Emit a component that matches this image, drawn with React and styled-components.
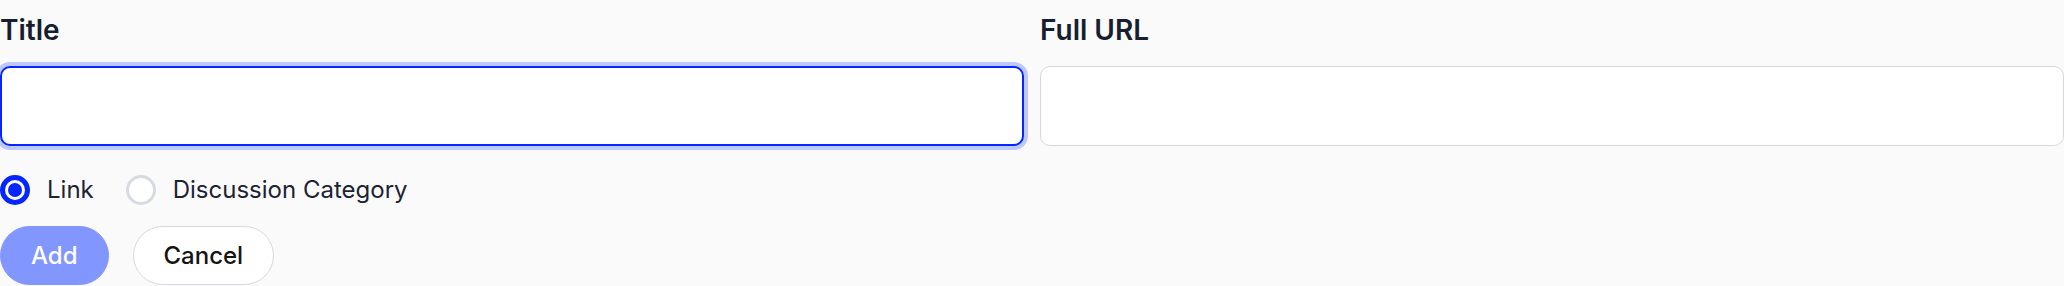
import React from 'react';
import styled, { createGlobalStyle } from 'styled-components';

const GlobalStyle = createGlobalStyle`
    html, body {
        margin: 0;
        padding: 0;
        background: #fafafa;
    }
    body {
        font-family: Inter, "Noto Sans", sans-serif;
        color: #182033;
    }
    * {
        box-sizing: border-box;
    }
`;

const Form = styled.form`
    display: flex;
    flex-direction: column;
    width: 2064px;
    height: 286px;
    background: #fafafa;
`;

const FieldsRow = styled.div`
    display: grid;
    grid-template-columns: 1fr 1fr;
    column-gap: 16px;
`;

const Field = styled.div`
    display: flex;
    flex-direction: column;
`;

const Label = styled.label`
    padding-top: 10px;
    margin-bottom: 16px;
    font-size: 28px;
    line-height: 40px;
    font-weight: 600;
    color: #161e30;
`;

const TextInput = styled.input`
    height: 80px;
    width: 100%;
    padding: 0 18px;
    border-radius: 10px;
    background: #fff;
    outline: none;
    font: inherit;
    font-size: 24px;
    border: ${p => (p.$focused ? '2px solid #0526ff' : '1.5px solid #d5d8de')};
    box-shadow: ${p => (p.$focused ? '0 0 0 4px #bdc9fe' : 'none')};
`;

const RadioRow = styled.div`
    display: flex;
    align-items: center;
    gap: 32px;
    margin-top: 29px;
`;

const RadioOption = styled.label`
    display: flex;
    align-items: center;
    gap: 17px;
    font-size: 24px;
    line-height: 30px;
    color: #1b2335;
`;

const RadioDot = styled.span`
    position: relative;
    width: 30px;
    height: 30px;
    border-radius: 50%;
    background: #fff;
    border: ${p => (p.$checked ? '5px solid #0526ff' : '3px solid #d6dae2')};

    &::after {
        content: '';
        display: ${p => (p.$checked ? 'block' : 'none')};
        position: absolute;
        inset: 3px;
        border-radius: 50%;
        background: #0526ff;
    }
`;

const ButtonRow = styled.div`
    display: flex;
    align-items: center;
    gap: 24px;
    margin-top: 21px;
`;

const Button = styled.button`
    height: 59px;
    padding: 0 30px;
    border-radius: 30px;
    font-family: Inter, sans-serif;
    font-size: 24px;
    font-weight: 500;
    cursor: pointer;
    background: ${p => (p.$primary ? '#8196ff' : '#fff')};
    color: ${p => (p.$primary ? '#fff' : '#141414')};
    border: ${p => (p.$primary ? '1.5px solid #8196ff' : '1.5px solid #d5d8de')};
`;

export default function App() {
    return (
        <>
            <GlobalStyle />
            <Form onSubmit={e => e.preventDefault()}>
                <FieldsRow>
                    <Field>
                        <Label>Title</Label>
                        <TextInput type="text" $focused />
                    </Field>
                    <Field>
                        <Label>Full URL</Label>
                        <TextInput type="text" />
                    </Field>
                </FieldsRow>
                <RadioRow>
                    <RadioOption>
                        <RadioDot $checked />
                        Link
                    </RadioOption>
                    <RadioOption>
                        <RadioDot />
                        Discussion Category
                    </RadioOption>
                </RadioRow>
                <ButtonRow>
                    <Button type="button" $primary disabled>Add</Button>
                    <Button type="button">Cancel</Button>
                </ButtonRow>
            </Form>
        </>
    );
}
